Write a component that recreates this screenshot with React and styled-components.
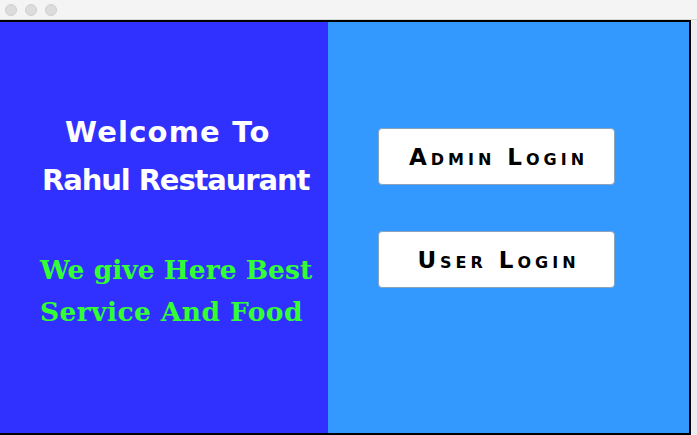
import React from "react";
import styled, { createGlobalStyle } from "styled-components";

const Global = createGlobalStyle`
  html, body { margin: 0; padding: 0; background: #eeeeee; }
  body { width: 697px; height: 435px; overflow: hidden; }
`;

const Window = styled.div`
  width: 697px;
  height: 435px;
  display: flex;
  flex-direction: column;
  background: #eeeeee;
`;

const TitleBar = styled.div`
  height: 19px;
  flex: none;
  background: #f4f4f4;
  border-bottom: 1px solid #d8d8d8;
  display: flex;
  align-items: center;
  gap: 8px;
  padding-left: 5px;
`;

const Dot = styled.span`
  width: 12px;
  height: 12px;
  border-radius: 50%;
  background: #dcdcdc;
  border: 0.5px solid #d0d0d0;
  box-sizing: border-box;
`;

const Frame = styled.div`
  width: 691px;
  flex: 1;
  box-sizing: border-box;
  border-top: 2px solid #000;
  border-right: 2px solid #000;
  border-bottom: 2px solid #000;
  display: flex;
`;

const LeftPanel = styled.div`
  width: 328px;
  flex: none;
  background: #3131ff;
  box-sizing: border-box;
  padding: 86px 0 0 42px;
  display: flex;
  flex-direction: column;
`;

const RightPanel = styled.div`
  flex: 1;
  background: #3399ff;
  display: flex;
  flex-direction: column;
  align-items: flex-start;
  padding: 106px 0 0 50px;
  gap: 46px;
`;

const Heading = styled.h1`
  margin: 0;
  font-family: "DejaVu Sans", sans-serif;
  font-weight: bold;
  font-size: 29px;
  line-height: 48px;
  color: #ffffff;
`;

const Line = styled.span`
  display: block;
  white-space: nowrap;
  padding-left: ${(p) => p.$indent || 0}px;
  letter-spacing: ${(p) => p.$spacing || 0}px;
`;

const Tagline = styled.p`
  margin: 45px 0 0 -2px;
  font-family: "DejaVu Serif", serif;
  font-weight: bold;
  font-size: 26.5px;
  line-height: 42px;
  color: #33ff33;
`;

const LoginButton = styled.button`
  width: 237px;
  height: 57px;
  box-sizing: border-box;
  background: #ffffff;
  border: 1px solid #8aa4c0;
  border-radius: 4px;
  font-family: "DejaVu Sans", sans-serif;
  font-weight: bold;
  font-size: 23px;
  font-variant: small-caps;
  letter-spacing: 4px;
  color: #000;
  padding: 0 0 0 4px;
  cursor: pointer;
`;

export default function App() {
  return (
    <>
      <Global />
      <Window>
        <TitleBar>
          <Dot />
          <Dot />
          <Dot />
        </TitleBar>
        <Frame>
          <LeftPanel>
            <Heading>
              <Line $indent={23} $spacing={1.2}>Welcome To</Line>
              <Line $spacing={-1.1}>Rahul Restaurant</Line>
            </Heading>
            <Tagline>
              <Line>We give Here Best</Line>
              <Line $spacing={0.4}>Service And Food</Line>
            </Tagline>
          </LeftPanel>
          <RightPanel>
            <LoginButton>Admin Login</LoginButton>
            <LoginButton>User Login</LoginButton>
          </RightPanel>
        </Frame>
      </Window>
    </>
  );
}
